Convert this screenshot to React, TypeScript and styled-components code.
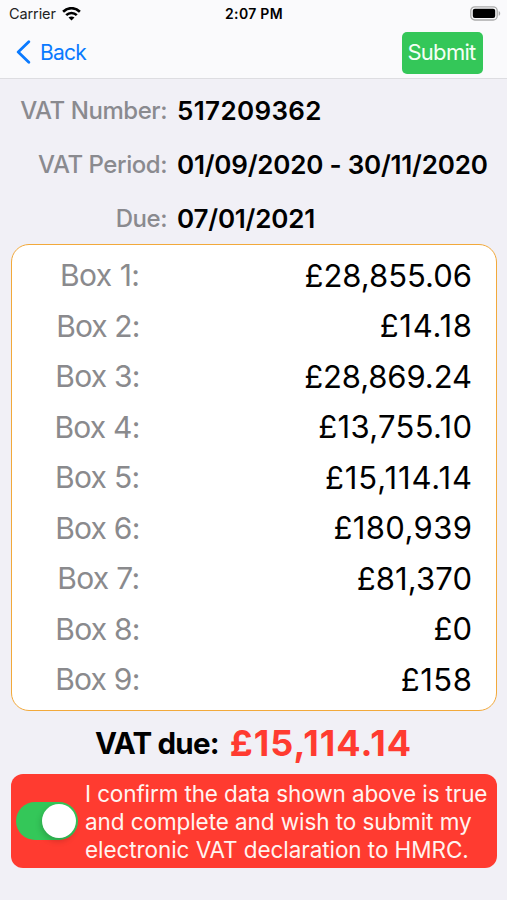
import React, { useState } from "react";
import styled, { createGlobalStyle } from "styled-components";

const GlobalStyle = createGlobalStyle`
  * { box-sizing: border-box; }
  body {
    margin: 0;
    background: #f1f0f6;
    font-family: Inter, "Liberation Sans", sans-serif;
    color: #000;
  }
  button { font-family: inherit; }
`;

const Screen = styled.main`
  width: 507px;
  height: 900px;
  overflow: hidden;
  background: #f1f0f6;
`;

const TopBar = styled.header`
  height: 79px;
  background: #fafafc;
  border-bottom: 1px solid #dddde1;
`;

const StatusBar = styled.div`
  display: grid;
  grid-template-columns: 1fr auto 1fr;
  align-items: center;
  height: 27px;
  padding: 0 6px 0 9px;
`;

const Carrier = styled.div`
  display: flex;
  align-items: center;
  gap: 6px;
  font-size: 14.5px;
  letter-spacing: -0.1px;
  color: #222;
`;

const Clock = styled.div`
  margin-right: 2px;
  font-size: 14px;
  font-weight: 600;
  letter-spacing: 0.3px;
`;

const BatterySlot = styled.div`
  display: flex;
  justify-content: flex-end;
`;

const NavBar = styled.nav`
  display: flex;
  align-items: center;
  justify-content: space-between;
  height: 51px;
  padding: 0 24px 0 16px;
`;

const BackButton = styled.button`
  display: flex;
  align-items: center;
  gap: 9px;
  padding: 0 0 1px;
  border: 0;
  background: none;
  color: #0a7aff;
  font-size: 21px;
  letter-spacing: -0.8px;
`;

const SubmitButton = styled.button`
  width: 81px;
  height: 42px;
  padding: 0 2px 2px 0;
  border: 0;
  border-radius: 5px;
  background: #34c759;
  color: #f4fff6;
  font-size: 22px;
  letter-spacing: -0.7px;
  white-space: nowrap;
`;

const Details = styled.dl`
  display: grid;
  grid-template-columns: 167px 1fr;
  grid-auto-rows: 53.7px;
  align-items: center;
  column-gap: 10px;
  height: 161px;
  margin: 5px 0 0;
`;

const DetailLabel = styled.dt`
  text-align: right;
  font-size: 24px;
  font-weight: 500;
  letter-spacing: -0.45px;
  white-space: nowrap;
  color: #8a8a8f;
`;

const DetailValue = styled.dd<{ $tracking: number }>`
  margin: 0;
  font-size: 26px;
  font-weight: 600;
  letter-spacing: ${(p) => p.$tracking}px;
  white-space: nowrap;
`;

const BoxCard = styled.section`
  height: 467px;
  margin: -1px 10px 0 11px;
  padding: 5px 24px 0 19px;
  border: 1.5px solid #f2a93b;
  border-radius: 18px;
  background: #fff;
`;

const BoxRow = styled.div`
  display: grid;
  grid-template-columns: 108.5px 1fr;
  align-items: center;
  height: 50.5px;
  text-align: right;
  white-space: nowrap;
`;

const BoxLabel = styled.span<{ $tracking: number }>`
  color: #8a8a8d;
  font-size: 30px;
  letter-spacing: ${(p) => p.$tracking}px;
`;

const BoxValue = styled.span<{ $tracking: number }>`
  font-size: 31px;
  letter-spacing: ${(p) => p.$tracking}px;
  margin-right: ${(p) => -p.$tracking}px;
`;

const Total = styled.div`
  display: flex;
  align-items: center;
  justify-content: center;
  gap: 11px;
  height: 63px;
  font-weight: 700;
  white-space: nowrap;
`;

const TotalLabel = styled.span`
  font-size: 29.5px;
  letter-spacing: -0.8px;
`;

const TotalValue = styled.span`
  color: #ff3b30;
  font-size: 36px;
  letter-spacing: 1px;
`;

const ConfirmCard = styled.section`
  display: flex;
  align-items: center;
  gap: 7px;
  height: 94px;
  margin: 0 10px 0 11px;
  padding-left: 5px;
  border-radius: 12px;
  background: #ff3b30;
`;

const Toggle = styled.button<{ $on: boolean }>`
  display: flex;
  align-items: center;
  justify-content: ${(p) => (p.$on ? "flex-end" : "flex-start")};
  flex: none;
  width: 62px;
  height: 38px;
  padding: 2px;
  border: 0;
  border-radius: 19px;
  background: ${(p) => (p.$on ? "#34c759" : "#e9e9ea")};
`;

const Knob = styled.span`
  width: 34px;
  height: 34px;
  border-radius: 50%;
  background: #fff;
  box-shadow: -1px 3px 6px rgba(0, 0, 0, 0.18);
`;

const ConfirmText = styled.p`
  margin: 0;
  padding-top: 2px;
  color: #fff4f0;
  font-size: 22.5px;
  line-height: 28px;
  white-space: nowrap;
`;

const Line = styled.span<{ $tracking: number }>`
  display: block;
  letter-spacing: ${(p) => p.$tracking}px;
`;

const details = [
  { label: "VAT Number:", value: "517209362", tracking: 0.35 },
  { label: "VAT Period:", value: "01/09/2020 - 30/11/2020", tracking: -0.22 },
  { label: "Due:", value: "07/01/2021", tracking: -0.2 },
];

const boxes = [
  { value: "£28,855.06", tracking: 0, labelTracking: -0.5 },
  { value: "£14.18", tracking: 0.75, labelTracking: -0.9 },
  { value: "£28,869.24", tracking: -0.1, labelTracking: -0.8 },
  { value: "£13,755.10", tracking: 0.3, labelTracking: -0.8 },
  { value: "£15,114.14", tracking: 0.9, labelTracking: -0.7 },
  { value: "£180,939", tracking: 0.4, labelTracking: -0.8 },
  { value: "£81,370", tracking: 0.1, labelTracking: -0.7 },
  { value: "£0", tracking: 0.1, labelTracking: -0.8 },
  { value: "£158", tracking: 0.6, labelTracking: -0.8 },
];

const confirmation = [
  { text: "I confirm the data shown above is true", tracking: -0.12 },
  { text: "and complete and wish to submit my", tracking: -0.08 },
  { text: "electronic VAT declaration to HMRC.", tracking: -0.07 },
];

const WifiIcon = () => (
  <svg width="19" height="14" viewBox="0 0 19 14" fill="none" stroke="#000" strokeWidth="2.6">
    <path d="M1.1 4.7C6 0 13 0 17.9 4.7" />
    <path d="M4.2 8.1c3-2.9 7.6-2.9 10.6 0" />
    <path d="M9.5 13.5 6.5 10.6c1.7-1.6 4.3-1.6 6 0Z" fill="#000" stroke="none" />
  </svg>
);

const BatteryIcon = () => (
  <svg width="31" height="15" viewBox="0 0 31 15">
    <rect x="0.8" y="0.8" width="26.4" height="13.2" rx="4" fill="#fafafc" stroke="#aaa" strokeWidth="1.3" />
    <rect x="2.8" y="2.7" width="22.4" height="9.4" rx="2" fill="#000" />
    <path d="M28.7 5c2 .8 2 4 0 4.8Z" fill="#aaa" />
  </svg>
);

const ChevronIcon = () => (
  <svg width="15" height="24" viewBox="0 0 15 24" fill="none" stroke="#0a7aff" strokeWidth="2.8" strokeLinecap="round" strokeLinejoin="round">
    <path d="M12.8 1.8 2.2 12l10.6 10.2" />
  </svg>
);

export default function App() {
  const [confirmed, setConfirmed] = useState(true);

  return (
    <>
      <GlobalStyle />
      <Screen>
        <TopBar>
          <StatusBar>
            <Carrier>
              Carrier
              <WifiIcon />
            </Carrier>
            <Clock>2:07 PM</Clock>
            <BatterySlot>
              <BatteryIcon />
            </BatterySlot>
          </StatusBar>
          <NavBar>
            <BackButton>
              <ChevronIcon />
              Back
            </BackButton>
            <SubmitButton>Submit</SubmitButton>
          </NavBar>
        </TopBar>
        <Details>
          {details.map((d) => (
            <React.Fragment key={d.label}>
              <DetailLabel>{d.label}</DetailLabel>
              <DetailValue $tracking={d.tracking}>{d.value}</DetailValue>
            </React.Fragment>
          ))}
        </Details>
        <BoxCard>
          {boxes.map((box, i) => (
            <BoxRow key={i}>
              <BoxLabel $tracking={box.labelTracking}>Box {i + 1}:</BoxLabel>
              <BoxValue $tracking={box.tracking}>{box.value}</BoxValue>
            </BoxRow>
          ))}
        </BoxCard>
        <Total>
          <TotalLabel>VAT due:</TotalLabel>
          <TotalValue>£15,114.14</TotalValue>
        </Total>
        <ConfirmCard>
          <Toggle
            role="switch"
            aria-checked={confirmed}
            $on={confirmed}
            onClick={() => setConfirmed(!confirmed)}
          >
            <Knob />
          </Toggle>
          <ConfirmText>
            {confirmation.map((l) => (
              <Line key={l.text} $tracking={l.tracking}>
                {l.text}
              </Line>
            ))}
          </ConfirmText>
        </ConfirmCard>
      </Screen>
    </>
  );
}
